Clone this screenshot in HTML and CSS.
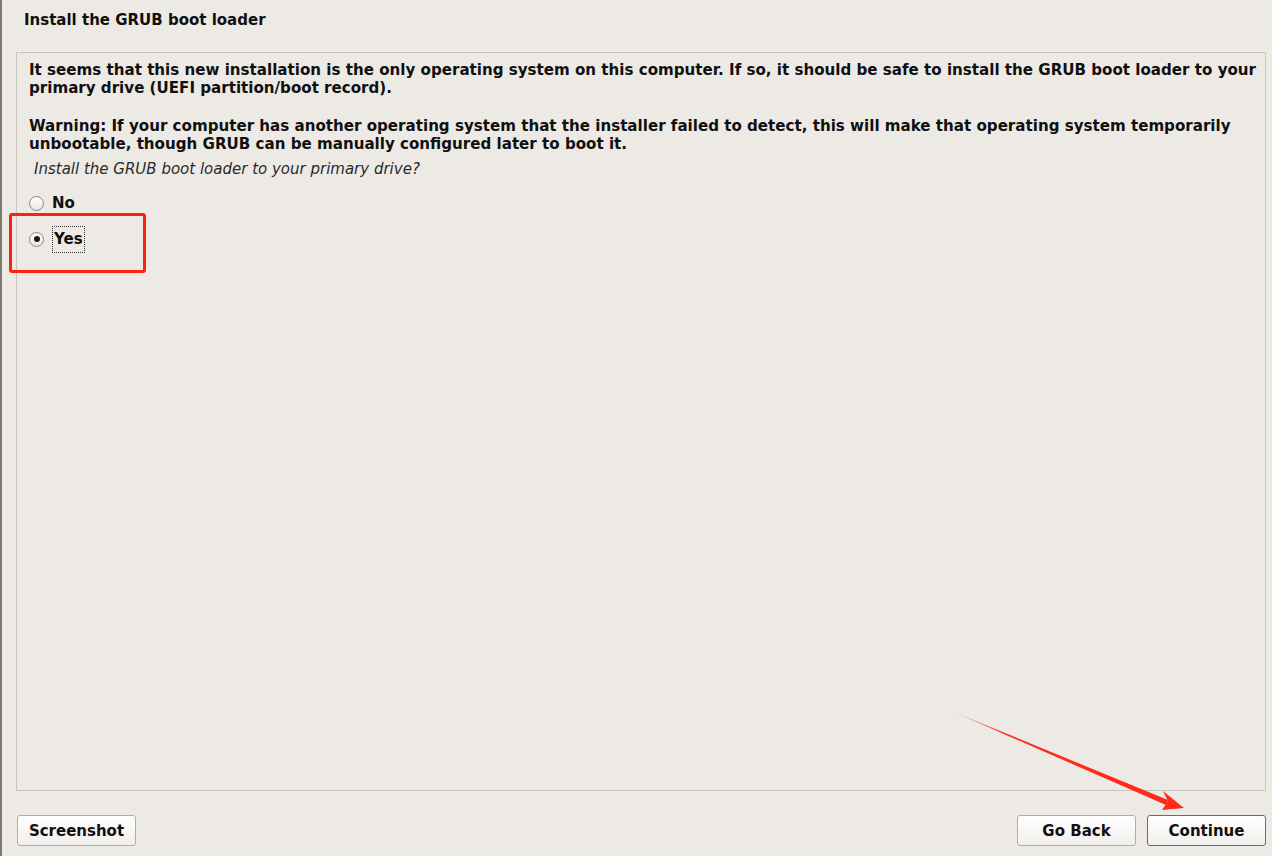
FILE: index.html
```html
<!DOCTYPE html>
<html lang="en">
<head>
  <meta charset="UTF-8">
  <title>Install the GRUB boot loader</title>
  <link rel="stylesheet" href="styles.css">
</head>
<body>
  <div class="window">
    <h1 class="title">Install the GRUB boot loader</h1>

    <div class="panel">
      <p class="msg">It seems that this new installation is the only operating system on this computer. If so, it should be safe to install the GRUB boot loader to your primary drive (UEFI partition/boot record).</p>
      <p class="msg">Warning: If your computer has another operating system that the installer failed to detect, this will make that operating system temporarily unbootable, though GRUB can be manually configured later to boot it.</p>
      <p class="question">Install the GRUB boot loader to your primary drive?</p>

      <div class="choices">
        <label class="choice">
          <span class="radio"></span>
          <span class="choice-text">No</span>
        </label>
        <label class="choice selected">
          <span class="radio"><span class="dot"></span></span>
          <span class="choice-text focus">Yes</span>
        </label>
        <div class="highlight"></div>
      </div>
    </div>

    <div class="buttons">
      <button class="btn">Screenshot</button>
      <div class="spacer"></div>
      <button class="btn">Go Back</button>
      <button class="btn default">Continue</button>
    </div>

    <!-- annotation arrow pointing at Continue -->
    <svg class="arrow" width="1272" height="856" viewBox="0 0 1272 856">
      <defs>
        <linearGradient id="fade" x1="947" y1="710" x2="1180" y2="808" gradientUnits="userSpaceOnUse">
          <stop offset="0" stop-color="#ff2a1a" stop-opacity="0.1"/>
          <stop offset="0.25" stop-color="#ff2a1a"/>
          <stop offset="1" stop-color="#ff2a1a"/>
        </linearGradient>
      </defs>
      <polygon points="947,710 1166,800 1164,805" fill="url(#fade)"/>
      <polygon points="1182,808 1161,791 1166,801 1160,810" fill="#ff2a1a"/>
    </svg>
  </div>
</body>
</html>
```

FILE: styles.css
```css
body {
  margin: 0;
  background-color: #edeae6;
  font-family: "DejaVu Sans", sans-serif;
  font-size: 15px;
  color: #101010;
}

.window {
  position: relative;
  height: 856px;
  border-left: 2px solid #7b7874;
  box-sizing: border-box;
  display: flex;
  flex-direction: column;
  padding: 0 6px 0 14px;
}

.title {
  margin: 0;
  padding: 10px 0 0 8px;
  height: 52px;
  flex-shrink: 0;
  box-sizing: border-box;
  font-size: 15px;
  line-height: 20px;
  font-weight: bold;
}

.panel {
  height: 739px;
  flex-shrink: 0;
  border: 1px solid #cbc4bc;
  box-sizing: border-box;
  padding: 8px 4px 0 12px;
}

.msg {
  margin: 0 0 20px 0;
  font-size: 15.1px;
  font-weight: bold;
  line-height: 18px;
}

.msg + .msg {
  margin-bottom: 0;
}

.question {
  margin: 7px 0 0 5px;
  font-style: italic;
  line-height: 18px;
  color: #2a2a2a;
}

/* radio choices */
.choices {
  position: relative;
  margin-top: 7px;
}

.choice {
  display: flex;
  align-items: center;
  height: 36px;
  font-weight: bold;
  font-size: 15px;
}

.radio {
  width: 13px;
  height: 13px;
  border: 1px solid #8a8580;
  border-radius: 50%;
  background: linear-gradient(#ffffff, #e8e6e3);
  display: flex;
  align-items: center;
  justify-content: center;
  margin-right: 8px;
}

.dot {
  width: 6px;
  height: 6px;
  border-radius: 50%;
  background: #1a1a1a;
}

.focus {
  border: 1px dotted #333;
  padding: 3px 1px 4px 1px;
}

.highlight {
  position: absolute;
  left: -20px;
  top: 28px;
  width: 131px;
  height: 54px;
  border: 3px solid #ff1f14;
  border-radius: 3px;
}

/* bottom buttons */
.buttons {
  display: flex;
  align-items: center;
  gap: 11px;
  padding-top: 24px;
  padding-left: 1px;
}

.spacer {
  flex: 1;
}

.btn {
  width: 119px;
  height: 31px;
  border: 1px solid #b3aca4;
  border-radius: 3px;
  background: linear-gradient(#ffffff, #f1efec);
  font-family: "DejaVu Sans", sans-serif;
  font-size: 15px;
  font-weight: bold;
  color: #101010;
}

.btn.default {
  border-color: #6e6a66;
}

.arrow {
  position: absolute;
  left: 0;
  top: 0;
  pointer-events: none;
}
```
